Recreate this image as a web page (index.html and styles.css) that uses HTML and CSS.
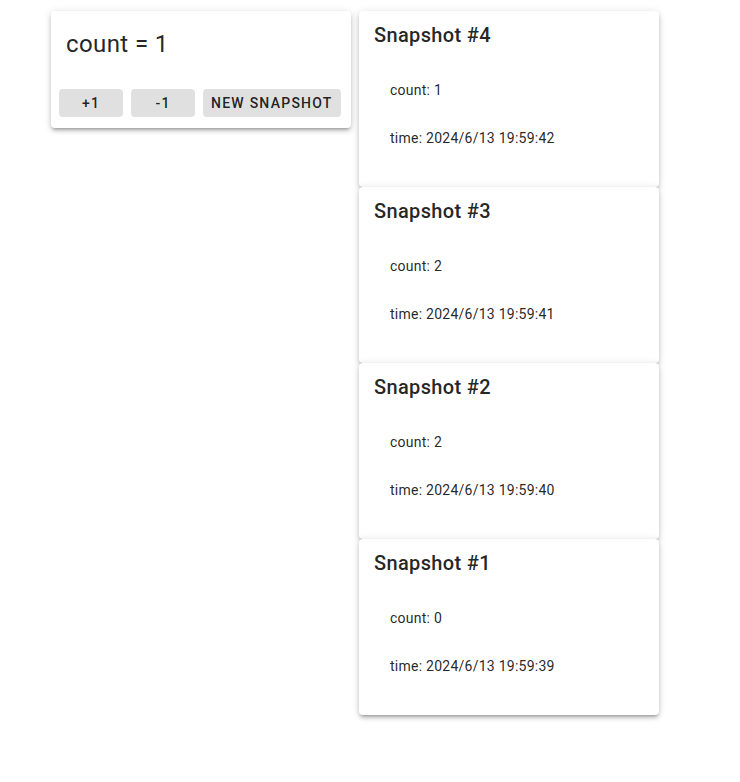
FILE: index.html
```html
<!DOCTYPE html>
<html>
<head>
<meta charset="utf-8">
<link rel="stylesheet" href="styles.css">
</head>
<body>
<div class="app">
  <div class="card counter">
    <div class="counter-title">count = 1</div>
    <div class="actions">
      <button class="btn small">+1</button>
      <button class="btn small">-1</button>
      <button class="btn">New snapshot</button>
    </div>
  </div>
  <div class="snapshots">
    <div class="card snap">
      <div class="snap-title">Snapshot #4</div>
      <ul class="snap-list"><li>count: 1</li><li>time: 2024/6/13 19:59:42</li></ul>
    </div>
    <div class="card snap">
      <div class="snap-title">Snapshot #3</div>
      <ul class="snap-list"><li>count: 2</li><li>time: 2024/6/13 19:59:41</li></ul>
    </div>
    <div class="card snap">
      <div class="snap-title">Snapshot #2</div>
      <ul class="snap-list"><li>count: 2</li><li>time: 2024/6/13 19:59:40</li></ul>
    </div>
    <div class="card snap">
      <div class="snap-title">Snapshot #1</div>
      <ul class="snap-list"><li>count: 0</li><li>time: 2024/6/13 19:59:39</li></ul>
    </div>
  </div>
</div>
</body>
</html>
```

FILE: styles.css
```css
* { box-sizing: border-box; }
html, body { margin: 0; background: #fff; }
body {
  font-family: Roboto, "Liberation Sans", sans-serif;
  color: rgba(0,0,0,0.87);
  min-height: 782px;
}
.app {
  display: flex;
  align-items: flex-start;
  gap: 8px;
  padding: 11px 0 40px 51px;
}
.card {
  width: 300px;
  background: #fff;
  border-radius: 4px;
  box-shadow: 0 3px 3px -2px rgba(0,0,0,0.25), 0 3px 4px 0 rgba(0,0,0,0.16), 0 1px 8px 0 rgba(0,0,0,0.12);
}
.counter { height: 117px; }
.counter-title {
  font-size: 24px;
  line-height: 32px;
  letter-spacing: 0.4px;
  padding: 17px 16px 0 15px;
}
.actions {
  display: flex;
  gap: 8px;
  padding: 29px 8px 8px 8px;
}
.btn {
  height: 28px;
  border: none;
  border-radius: 4px;
  background: #e0e0e0;
  font-family: Roboto, "Liberation Sans", sans-serif;
  font-size: 14px;
  font-weight: 500;
  letter-spacing: 1.25px;
  text-transform: uppercase;
  color: rgba(0,0,0,0.87);
  padding: 0 8px;
}
.btn.small { width: 64px; }
.snapshots { display: flex; flex-direction: column; }
.snap { height: 176px; }
.snap-title {
  font-size: 20px;
  font-weight: 500;
  line-height: 32px;
  padding: 8px 16px 8px 15px;
  letter-spacing: 0.35px;
}
.snap-list {
  list-style: none;
  margin: 0;
  padding: 7px 16px 0 31px;
  font-size: 14px;
  letter-spacing: 0.25px;
}
.snap-list li {
  height: 48px;
  line-height: 48px;
}
```
